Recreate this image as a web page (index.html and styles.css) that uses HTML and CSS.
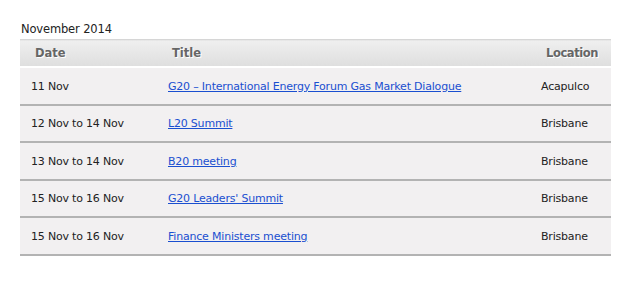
FILE: index.html
```html
<!DOCTYPE html>
<html>
<head>
<meta charset="utf-8">
<link rel="stylesheet" href="styles.css">
</head>
<body>
<div class="wrap">
  <div class="month">November 2014</div>
  <table class="events">
    <thead>
      <tr><th class="c-date">Date</th><th class="c-title">Title</th><th class="c-loc">Location</th></tr>
    </thead>
    <tbody>
      <tr><td>11 Nov</td><td><a href="#">G20 – International Energy Forum Gas Market Dialogue</a></td><td>Acapulco</td></tr>
      <tr><td>12 Nov to 14 Nov</td><td><a href="#">L20 Summit</a></td><td>Brisbane</td></tr>
      <tr><td>13 Nov to 14 Nov</td><td><a href="#">B20 meeting</a></td><td>Brisbane</td></tr>
      <tr><td>15 Nov to 16 Nov</td><td><a href="#">G20 Leaders' Summit</a></td><td>Brisbane</td></tr>
      <tr><td>15 Nov to 16 Nov</td><td><a href="#">Finance Ministers meeting</a></td><td>Brisbane</td></tr>
    </tbody>
  </table>
</div>
</body>
</html>
```
FILE: styles.css
```css
html, body { margin: 0; padding: 0; background: #fff; }
body { font-family: "DejaVu Sans", Verdana, sans-serif; font-size: 11px; color: #222; }
.wrap { padding: 20px 29px 0 20px; }
.month { padding-left: 1px; height: 19px; line-height: 19px; font-size: 11.5px; letter-spacing: -0.15px; color: #222; }
.events { width: 591px; border-collapse: collapse; border-spacing: 0; }
.events th {
  height: 26px; padding: 0 0 0 15px; text-align: left; font-weight: bold; color: #666;
  font-size: 11.5px;
  text-shadow: 1px 1px 0 #fff;
  background: linear-gradient(#efefef, #dedede);
  border-top: 1px solid #d6d6d6;
  border-bottom: 2px solid #fff;
}
.events th.c-loc { padding-left: 16px; letter-spacing: -0.4px; }
.c-date { width: 122px; }
.c-title { width: 358px; }
.events td {
  height: 34.5px; padding: 1px 0 0 11px; background: #f2f0f1;
  border-bottom: 2px solid #b3b3b3;
  vertical-align: middle;
  letter-spacing: -0.2px;
}
.events a { color: #1a4fd0; text-decoration: underline; }
```
